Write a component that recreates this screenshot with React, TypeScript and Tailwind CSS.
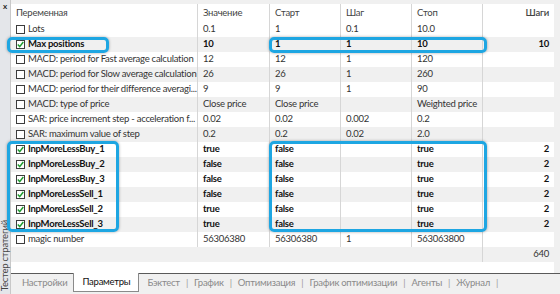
import React from "react";

type Row = {
  name: string;
  checked?: boolean;
  bold?: boolean;
  value: string;
  start: string;
  step: string;
  stop: string;
  steps?: string;
};

const rows: Row[] = [
  { name: "Lots", value: "0.1", start: "1", step: "0.1", stop: "10.0" },
  { name: "Max positions", checked: true, bold: true, value: "10", start: "1", step: "1", stop: "10", steps: "10" },
  { name: "MACD: period for Fast average calculation", value: "12", start: "12", step: "1", stop: "120" },
  { name: "MACD: period for Slow average calculation", value: "26", start: "26", step: "1", stop: "260" },
  { name: "MACD: period for their difference averagi...", value: "9", start: "9", step: "1", stop: "90" },
  { name: "MACD: type of price", value: "Close price", start: "Close price", step: "", stop: "Weighted price" },
  { name: "SAR: price increment step - acceleration f...", value: "0.02", start: "0.02", step: "0.002", stop: "0.2" },
  { name: "SAR: maximum value of step", value: "0.2", start: "0.2", step: "0.02", stop: "2.0" },
  { name: "InpMoreLessBuy_1", checked: true, bold: true, value: "true", start: "false", step: "", stop: "true", steps: "2" },
  { name: "InpMoreLessBuy_2", checked: true, bold: true, value: "false", start: "false", step: "", stop: "true", steps: "2" },
  { name: "InpMoreLessBuy_3", checked: true, bold: true, value: "false", start: "false", step: "", stop: "true", steps: "2" },
  { name: "InpMoreLessSell_1", checked: true, bold: true, value: "false", start: "false", step: "", stop: "true", steps: "2" },
  { name: "InpMoreLessSell_2", checked: true, bold: true, value: "true", start: "false", step: "", stop: "true", steps: "2" },
  { name: "InpMoreLessSell_3", checked: true, bold: true, value: "true", start: "false", step: "", stop: "true", steps: "2" },
  { name: "magic number", value: "56306380", start: "56306380", step: "1", stop: "563063800" },
];

const tabs = ["Настройки", "Параметры", "Бэктест", "График", "Оптимизация", "График оптимизации", "Агенты", "Журнал"];

const Checkbox = ({ checked }: { checked?: boolean }) => (
  <span className="w-[9px] h-[9px] border border-[#3c3c3c] bg-white flex items-center justify-center shrink-0">
    {checked && (
      <svg width="7" height="7" viewBox="0 0 7 7">
        <path d="M0.8 3.6 L2.7 5.6 L6.3 1" fill="none" stroke="#1e9b2e" strokeWidth="1.5" />
      </svg>
    )}
  </span>
);

const cell = "border-r border-[#d6d6d6] px-[5px] flex items-center whitespace-nowrap overflow-hidden";

const Highlight = ({ className }: { className: string }) => (
  <div
    className={`absolute border-[3px] border-[#1ea6e2] rounded-[5px] shadow-[0_0_3px_rgba(0,0,0,0.35)] pointer-events-none ${className}`}
  />
);

const App = () => {
  return (
    <div
      className="relative w-[560px] h-[294px] bg-[#f0f0f0] flex overflow-hidden text-[9.5px] tracking-[-0.25px] text-[#333]"
      style={{ fontFamily: "'Segoe UI', Lato, sans-serif" }}
    >
      {/* side dock strip */}
      <div className="w-[11px] h-full bg-[#e4e6ea] border-r border-[#c8c8c8] flex flex-col items-center justify-between pt-[2px] pb-[3px]">
        <span className="text-[8px] font-bold leading-none text-[#222]">x</span>
        <span className="[writing-mode:vertical-rl] rotate-180 text-[9.5px] leading-none text-[#444]">
          Тестер стратегий
        </span>
      </div>

      <div className="flex-1 flex flex-col pt-[4px]">
        <div className="w-[543px] bg-white flex flex-col">
          <div className="grid grid-cols-[187px_72px_71px_71px_71px_71px] h-[18px] text-[#444]">
            <div className={cell}>Переменная</div>
            <div className={cell}>Значение</div>
            <div className={cell}>Старт</div>
            <div className={cell}>Шаг</div>
            <div className={cell}>Стоп</div>
            <div className={`${cell} justify-end border-r-0 font-semibold`}>Шаги</div>
          </div>
          {rows.map((r, i) => (
            <div
              key={r.name}
              className={`grid grid-cols-[187px_72px_71px_71px_71px_71px] h-[15px] ${
                i % 2 === 1 ? "bg-[#f0f0f0]" : "bg-white"
              } ${r.bold ? "font-bold text-[#111]" : ""}`}
            >
              <div className={`${cell} gap-[3px]`}>
                <Checkbox checked={r.checked} />
                <span>{r.name}</span>
              </div>
              <div className={cell}>{r.value}</div>
              <div className={cell}>{r.start}</div>
              <div className={cell}>{r.step}</div>
              <div className={cell}>{r.stop}</div>
              <div className={`${cell} justify-end border-r-0`}>{r.steps}</div>
            </div>
          ))}
          <div className="grid grid-cols-[472px_71px] h-[15px] bg-[#f0f0f0]">
            <div className="border-r border-[#d6d6d6]" />
            <div className="flex items-center justify-end px-[5px]">640</div>
          </div>
          <div className="h-[11px] bg-white" />
        </div>

        <div className="flex-1 border-t border-[#5a5a5a] flex items-start pl-[5px] text-[#8a8a8a]">
          {tabs.map((t, i) =>
            i === 1 ? (
              <div
                key={t}
                className="h-[19px] -mt-px px-[8px] mr-[2px] bg-white border border-t-0 border-[#8a8a8a] flex items-center text-[#111]"
              >
                {t}
              </div>
            ) : (
              <div key={t} className="h-[18px] flex items-center">
                <span className="px-[6px]">{t}</span>
                {i > 1 && <span className="text-[#9a9a9a]">|</span>}
              </div>
            )
          )}
        </div>
      </div>

      <Highlight className="left-[7px] top-[37px] w-[102px] h-[16px]" />
      <Highlight className="left-[269px] top-[37px] w-[218px] h-[16px]" />
      <Highlight className="left-[7px] top-[141px] w-[112px] h-[91px]" />
      <Highlight className="left-[269px] top-[141px] w-[218px] h-[91px]" />
    </div>
  );
};

export default App;
